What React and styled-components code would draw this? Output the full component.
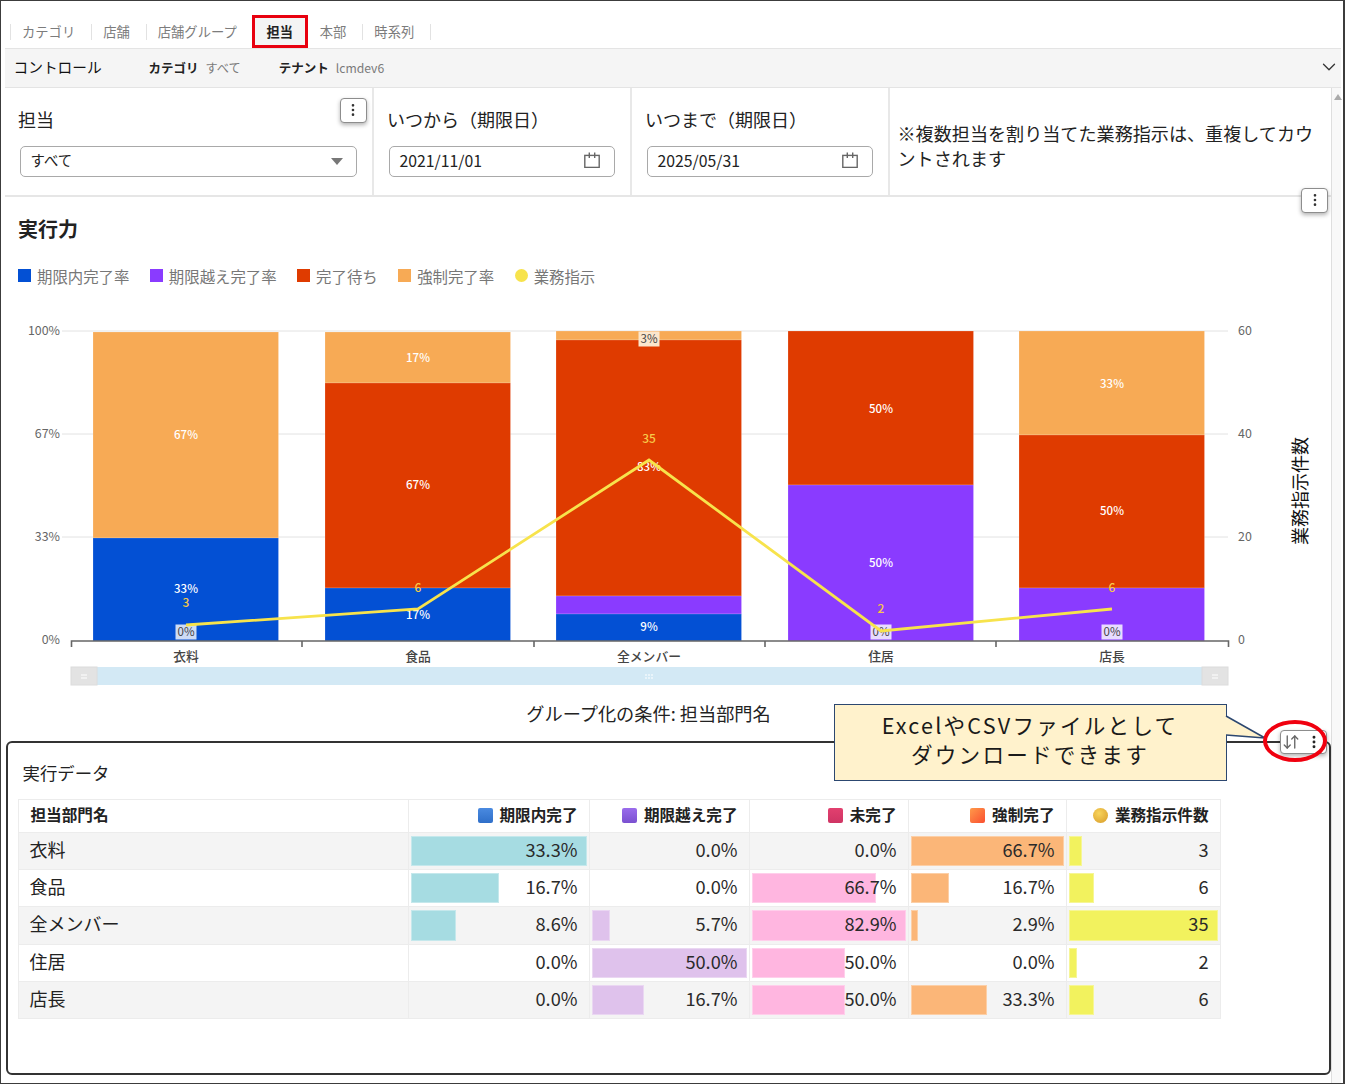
import React from "react";
import styled, { createGlobalStyle } from "styled-components";
import { ChevronDown, EllipsisVertical, ArrowDownUp } from "lucide-react";

const Global = createGlobalStyle`
  html, body { margin: 0; padding: 0; background: #fff; }
  * { box-sizing: border-box; }
  body { font-family: "Noto Sans CJK JP", "Noto Sans", sans-serif; color: #222; }
`;

const Page = styled.div`
  width: 1345px; height: 1084px; overflow: hidden; background: #fff;
  border: solid #3c3c3c; border-width: 1.5px 2px 1.5px 1.5px;
  display: flex; flex-direction: column;
`;
const TabBar = styled.div`
  display: flex; align-items: center; height: 46px; padding: 14px 0 0 9px; flex: none;
`;
const Tab = styled.div`
  font-size: 13.3px; line-height: 16px; height: 16px; color: #7c7c7c; white-space: nowrap;
  padding: 0 16px 0 11px; margin-top: 2px;
  border-left: ${p => (p.$plain ? "none" : "1px solid #e2e2e2")};
  border-right: ${p => (p.$last ? "1px solid #e2e2e2" : "none")};
`;
const ActiveTab = styled.div`
  height: 33px; width: 56px; margin: 0 1px 0 -1px;
  border: 3.5px solid #e8000f; background: #f4f4f4; flex: none;
  display: flex; align-items: center; justify-content: center;
  font-size: 13.2px; font-weight: 700; color: #222;
`;
const ControlBar = styled.div`
  flex: none; height: 39.5px; margin: 1px 0 0 3.5px; width: 1336px;
  background: #f5f5f5; border: solid #e4e4e4; border-width: 1.5px 0;
  display: flex; align-items: center; position: relative;
`;
const ControlTitle = styled.span`
  font-size: 14.7px; font-weight: 400; margin: -2px 0 0 9px; width: 135px; color: #111;
`;
const ControlKey = styled.span`font-size: 12.5px; font-weight: 700; margin-right: 7px; color: #222;`;
const ControlValue = styled.span`font-size: 12.2px; color: #7a7a7a; margin-right: 38px;`;
const Collapse = styled.span`
  position: absolute; right: 1px; top: 7px; display: flex; color: #333;
`;
const Body = styled.div`flex: 1; min-height: 0; display: flex; margin-left: 3.5px;`;
const Main = styled.div`width: 1326.5px; flex: none; position: relative; display: flex; flex-direction: column;`;
const Rail = styled.div`
  width: 10px; flex: none; background: #f8f8f8; border-left: 1px solid #dedede; position: relative;
  &::before {
    content: ""; position: absolute; top: 6px; left: 2px;
    border: 4px solid transparent; border-top: 0; border-bottom: 6px solid #aaa;
  }
`;
const FilterRow = styled.div`
  height: 109px; flex: none; display: flex; border-bottom: 2.5px solid #e6e6e6;
`;
const FilterCol = styled.div`
  width: ${p => p.$w}px; flex: ${p => (p.$w ? "none" : 1)}; position: relative;
  border-right: ${p => (p.$w ? "2px solid #e8e8e8" : "none")};
  padding: ${p => p.$pad || "18px 0 0 13.5px"};
`;
const FilterLabel = styled.div`
  font-size: 18px; line-height: 26px; color: #222; margin-bottom: 14px; white-space: nowrap;
`;
const SelectBox = styled.div`
  height: 31.5px; width: 337px; margin-left: 1.5px; border: 1.5px solid #a9a9a9; border-radius: 5px;
  display: flex; align-items: center; justify-content: space-between; padding: 0 13px 3px 10px;
  font-size: 14.4px; color: #222;
`;
const Caret = styled.span`
  border: 6px solid transparent; border-bottom: 0; border-top: 7px solid #777; margin-top: 4px;
`;
const DateBox = styled.div`
  height: 31.5px; width: 226px; margin-left: 1.5px; border: 1.5px solid #a9a9a9; border-radius: 5px;
  display: flex; align-items: center; justify-content: space-between; padding: 0 13.5px 2px 10px;
  font-size: 15.8px; color: #222;
`;
const Note = styled.div`font-size: 18.1px; line-height: 25px; color: #222; width: 427px;`;
const MenuButton = styled.button`
  position: absolute; right: ${p => p.$r}px; top: ${p => p.$t}px;
  width: 27px; height: 25px; padding: 0; background: #fff;
  border: 1px solid #8d8d8d; border-radius: 4px; color: #333;
  box-shadow: 0 2px 4px rgba(0,0,0,.3);
  display: flex; align-items: center; justify-content: center;
`;
const SectionTitle = styled.h2`
  margin: 18px 0 0 13.5px; font-size: 20px; line-height: 28px; font-weight: 700; color: #222; flex: none;
`;
const Legend = styled.div`display: flex; align-items: center; height: 24px; margin: 21px 0 0 13.5px; flex: none;`;
const LegendItem = styled.div`
  display: flex; align-items: center; gap: 6px; font-size: 15.4px; color: #777; margin-right: 20.5px; white-space: nowrap;
  &::before {
    content: ""; width: 13px; height: 13px; background: ${p => p.$c};
    border-radius: ${p => (p.$round ? "50%" : "0")}; flex: none;
  }
`;
const ChartSvg = styled.svg`
  display: block; flex: none; margin-top: 32px;
  font-family: "Noto Sans CJK JP", "Noto Sans", sans-serif;
`;
const Caption = styled.div`
  flex: none; text-align: center; font-size: 18.2px; line-height: 24px; height: 24px; color: #222;
  margin-top: 1px; width: 1288px;
`;
const DataPanel = styled.div`
  flex: none; height: 334px; margin: 16px 0 0 1px; width: 1325px; position: relative;
  border: 2px solid #333; border-radius: 6px;
  padding: 16px 0 0 10px;
`;
const PanelTitle = styled.div`
  font-size: 17.4px; line-height: 28px; color: #222; margin: 0 0 12px 5px;
`;
const Table = styled.table`
  border-collapse: collapse; table-layout: fixed; width: 1203px;
`;
const HeadCell = styled.th`
  height: 33px; padding: 0 11px 3px 12px; font-size: 15.6px; font-weight: 700; color: #222;
  text-align: ${p => (p.$left ? "left" : "right")};
  border: 1.5px solid #ececec; white-space: nowrap;
`;
const HeadSwatch = styled.span`
  display: inline-block; width: 15px; height: 15px; margin-right: 7px; vertical-align: -2px;
  border-radius: ${p => (p.$round ? "50%" : "2px")};
  background: ${p => p.$bg};
`;
const Row = styled.tr`
  height: 37.4px; background: ${p => (p.$odd ? "#f4f4f4" : "#fff")};
`;
const NameCell = styled.td`
  padding: 0 11px 4px; font-size: 18px; color: #222; border: 1.5px solid #ececec;
`;
const ValueCell = styled.td`
  position: relative; padding: 0 11px 4px 0; text-align: right; font-size: 18.2px; color: #2a2a2a;
  border: 1.5px solid #ececec;
`;
const BarTrack = styled.div`position: absolute; left: 2.5px; right: 2px; top: 3px; bottom: 3px;`;
const Bar = styled.div`height: 100%; background: ${p => p.$c}; border: 1px solid rgba(255,255,255,.35);`;
const CellText = styled.span`position: relative;`;
const Callout = styled.div`
  position: absolute; left: 826px; top: -39px; width: 393px; height: 77px;
  background: #fff2cc; border: 1.5px solid #2c4770; z-index: 3; padding-bottom: 6px;
  display: flex; align-items: center; justify-content: center; text-align: center;
  font-size: 21.6px; line-height: 29.5px; letter-spacing: 2.2px; font-weight: 400; color: #1a1a1a;
`;
const CalloutTail = styled.svg`position: absolute; left: 1218px; top: -27px; z-index: 4; overflow: visible;`;
const SortButton = styled.div`
  position: absolute; right: 2px; top: -13px; width: 47px; height: 24px; z-index: 4;
  background: #fff; border: 1px solid #8d8d8d; border-radius: 4px; color: #666;
  box-shadow: 0 2px 4px rgba(0,0,0,.3);
  display: flex; align-items: center; justify-content: space-between; padding: 0 4px 0 1px;
`;
const Ring = styled.div`
  position: absolute; left: 1255.5px; top: -23px; width: 64px; height: 42px; z-index: 5;
  border: 4px solid #f0000f; border-radius: 50%;
`;

const CalendarIcon = () => (
  <svg width="16" height="16" viewBox="0 0 16 16" fill="none" stroke="#666" strokeWidth="1.4">
    <rect x="0.8" y="3.4" width="14.4" height="12" />
    <path d="M5.3 0.5v5.5M10.7 0.5v5.5" />
  </svg>
);

const BLUE = "#0350d4", PURPLE = "#8a3bff", RED = "#df3b00", ORANGE = "#f7aa55", LINE = "#f7e34c";
const bars = [
  { x: 93, segs: [[ORANGE, 332, 538], [BLUE, 538, 641]], labels: [[67, 435, "w"], [33, 589, "w"], [0, 632, "b"]], cat: "衣料", cx: 186 },
  { x: 325, segs: [[ORANGE, 332, 383], [RED, 383, 588], [BLUE, 588, 641]], labels: [[17, 358, "w"], [67, 485, "w"], [17, 615, "w"]], cat: "食品", cx: 418 },
  { x: 556, segs: [[ORANGE, 331, 340], [RED, 340, 596], [PURPLE, 596, 614], [BLUE, 614, 641]], labels: [[3, 339, "b"], [83, 467, "w"], [9, 627, "w"]], cat: "全メンバー", cx: 649 },
  { x: 788, segs: [[RED, 331, 485], [PURPLE, 485, 641]], labels: [[50, 409, "w"], [50, 563, "w"], [0, 632, "p"]], cat: "住居", cx: 881 },
  { x: 1019, segs: [[ORANGE, 331, 435], [RED, 435, 588], [PURPLE, 588, 641]], labels: [[33, 384, "w"], [50, 511, "w"], [0, 632, "p"]], cat: "店長", cx: 1112 },
];
const pts = [[186, 625, 3, 603], [418, 609, 6, 588], [649, 460, 35, 439], [881, 631, 2, 609], [1112, 609, 6, 588]];

const Chart = () => (
  <ChartSvg width="1326" height="380" viewBox="5 320 1326 380">
    {[331, 434, 537].map(y => <line key={y} x1="62" x2="1228" y1={y} y2={y} stroke="#e2e2e2" />)}
    {[["100%", 331], ["67%", 434], ["33%", 537], ["0%", 640]].map(([t, y]) => (
      <text key={t} x="60" y={y + 4} textAnchor="end" fontSize="12.4" fill="#666">{t}</text>
    ))}
    {[["60", 331], ["40", 434], ["20", 537], ["0", 640]].map(([t, y]) => (
      <text key={t} x="1238" y={y + 4} fontSize="12.4" fill="#666">{t}</text>
    ))}
    {bars.map(b => b.segs.map(([c, y1, y2], i) => (
      <rect key={b.x + "-" + i} x={b.x} y={y1} width="185.5" height={y2 - y1} fill={c} stroke="rgba(255,255,255,.3)" strokeWidth="0.6" />
    )))}
    {bars.map(b => b.labels.map(([v, y, k]) => (
      <g key={b.x + "-" + v + y}>
        {k !== "w" && (
          <rect x={b.cx - 10.5} y={y - 7.5} width="21" height="15"
            fill={y < 400 ? "#fbe6cc" : k === "p" ? "#e8dcff" : "#cddcf5"} />
        )}
        <text x={b.cx} y={y + 4} textAnchor="middle" fontSize="11.5" fontWeight={k === "w" ? 500 : 400}
          fill={k === "w" ? "#fff" : "#444"}>{v}%</text>
      </g>
    )))}
    <polyline points={pts.map(p => p[0] + "," + p[1]).join(" ")} fill="none" stroke={LINE} strokeWidth="2.8" />
    {pts.map(p => (
      <text key={p[0]} x={p[0]} y={p[3] + 4} textAnchor="middle" fontSize="12" fontWeight="500" fill="#f7c948">{p[2]}</text>
    ))}
    <path d="M71.5 647V641H1228.5V647" fill="none" stroke="#666" strokeWidth="1.6" />
    {[302, 534, 765, 996].map(x => <line key={x} x1={x} x2={x} y1="641" y2="647" stroke="#666" strokeWidth="1.6" />)}
    {bars.map(b => <text key={b.cat} x={b.cx} y="661" textAnchor="middle" fontSize="12.8" fontWeight="500" fill="#444">{b.cat}</text>)}
    <rect x="71" y="667" width="1157" height="18" fill="#d3e9f5" />
    {[71, 1202].map(x => (
      <g key={x}>
        <rect x={x} y="667" width="26" height="18" fill="#e3e3e3" stroke="#dcdcdc" />
        <path d={`M${x + 10} 675h6M${x + 10} 678h6`} stroke="#fff" />
      </g>
    ))}
    <path d="M645 675h8M645 678h8" stroke="#fff" strokeDasharray="2 1" />
    <text x="1299" y="491" transform="rotate(-90 1299 491)" textAnchor="middle" dominantBaseline="central"
      fontSize="18" fontWeight="400" fill="#111">業務指示件数</text>
  </ChartSvg>
);

const columns = [
  { title: "期限内完了", swatch: "linear-gradient(#4a8ae0,#2f6fc9)", color: "#a6dce2", key: 0, w: 181 },
  { title: "期限越え完了", swatch: "linear-gradient(#9a6cec,#7a50d0)", color: "#dfc2ec", key: 1, w: 160 },
  { title: "未完了", swatch: "linear-gradient(#e2406f,#cf3464)", color: "#ffb6e0", key: 2, w: 159 },
  { title: "強制完了", swatch: "linear-gradient(135deg,#ff9a4a,#fa4f30)", color: "#fbb678", key: 3, w: 158 },
  { title: "業務指示件数", swatch: "radial-gradient(circle at 40% 35%,#f8d45c,#d79a28)", color: "#f2f25e", key: 4, w: 154, round: true },
];
const rows = [
  ["衣料", [33.3, 0, 0, 66.7, 3]],
  ["食品", [16.7, 0, 66.7, 16.7, 6]],
  ["全メンバー", [8.6, 5.7, 82.9, 2.9, 35]],
  ["住居", [0, 50, 50, 0, 2]],
  ["店長", [0, 16.7, 50, 33.3, 6]],
];
const maxOf = i => Math.max(...rows.map(r => r[1][i]));

export default function App() {
  return (
    <>
      <Global />
      <Page>
        <TabBar>
          <Tab>カテゴリ</Tab>
          <Tab>店舗</Tab>
          <Tab>店舗グループ</Tab>
          <ActiveTab>担当</ActiveTab>
          <Tab $plain>本部</Tab>
          <Tab $last>時系列</Tab>
        </TabBar>
        <ControlBar>
          <ControlTitle>コントロール</ControlTitle>
          <ControlKey>カテゴリ</ControlKey><ControlValue>すべて</ControlValue>
          <ControlKey>テナント</ControlKey><ControlValue>lcmdev6</ControlValue>
          <Collapse><ChevronDown size={22} strokeWidth={1.4} /></Collapse>
        </ControlBar>
        <Body>
          <Main>
            <FilterRow>
              <FilterCol $w={369}>
                <FilterLabel>担当</FilterLabel>
                <SelectBox>すべて<Caret /></SelectBox>
                <MenuButton $r={5} $t={10}><EllipsisVertical size={16} /></MenuButton>
              </FilterCol>
              <FilterCol $w={258}>
                <FilterLabel>いつから（期限日）</FilterLabel>
                <DateBox>2021/11/01<CalendarIcon /></DateBox>
              </FilterCol>
              <FilterCol $w={258}>
                <FilterLabel>いつまで（期限日）</FilterLabel>
                <DateBox>2025/05/31<CalendarIcon /></DateBox>
              </FilterCol>
              <FilterCol $pad="33px 0 0 8px"><Note>※複数担当を割り当てた業務指示は、重複してカウントされます</Note></FilterCol>
            </FilterRow>
            <MenuButton $r={3} $t={100}><EllipsisVertical size={16} /></MenuButton>
            <SectionTitle>実行力</SectionTitle>
            <Legend>
              <LegendItem $c={BLUE}>期限内完了率</LegendItem>
              <LegendItem $c={PURPLE}>期限越え完了率</LegendItem>
              <LegendItem $c={RED}>完了待ち</LegendItem>
              <LegendItem $c={ORANGE}>強制完了率</LegendItem>
              <LegendItem $c={LINE} $round>業務指示</LegendItem>
            </Legend>
            <Chart />
            <Caption>グループ化の条件: 担当部門名</Caption>
            <DataPanel>
              <PanelTitle>実行データ</PanelTitle>
              <Callout>ExcelやCSVファイルとして<br />ダウンロードできます</Callout>
              <CalloutTail width="40" height="24" viewBox="0 0 40 24">
                <path d="M0 0L39 22L0 19" fill="#fff2cc" stroke="#2c4770" strokeWidth="1.5" />
              </CalloutTail>
              <SortButton>
                <ArrowDownUp size={18} strokeWidth={1.8} />
                <EllipsisVertical size={16} color="#222" strokeWidth={2.4} />
              </SortButton>
              <Ring />
              <Table>
                <colgroup>
                  <col style={{ width: 390 }} />
                  {columns.map(c => <col key={c.key} style={{ width: c.w }} />)}
                </colgroup>
                <thead>
                  <tr>
                    <HeadCell $left>担当部門名</HeadCell>
                    {columns.map(c => (
                      <HeadCell key={c.key}>
                        <HeadSwatch $bg={c.swatch} $round={c.round} />{c.title}
                      </HeadCell>
                    ))}
                  </tr>
                </thead>
                <tbody>
                  {rows.map(([name, vals], r) => (
                    <Row key={name} $odd={r % 2 === 0}>
                      <NameCell>{name}</NameCell>
                      {vals.map((v, i) => (
                        <ValueCell key={i}>
                          <BarTrack>
                            {v > 0 && <Bar $c={columns[i].color} style={{ width: (v / maxOf(i)) * 100 + "%" }} />}
                          </BarTrack>
                          <CellText>{i === 4 ? v : v.toFixed(1) + "%"}</CellText>
                        </ValueCell>
                      ))}
                    </Row>
                  ))}
                </tbody>
              </Table>
            </DataPanel>
          </Main>
          <Rail />
        </Body>
      </Page>
    </>
  );
}
